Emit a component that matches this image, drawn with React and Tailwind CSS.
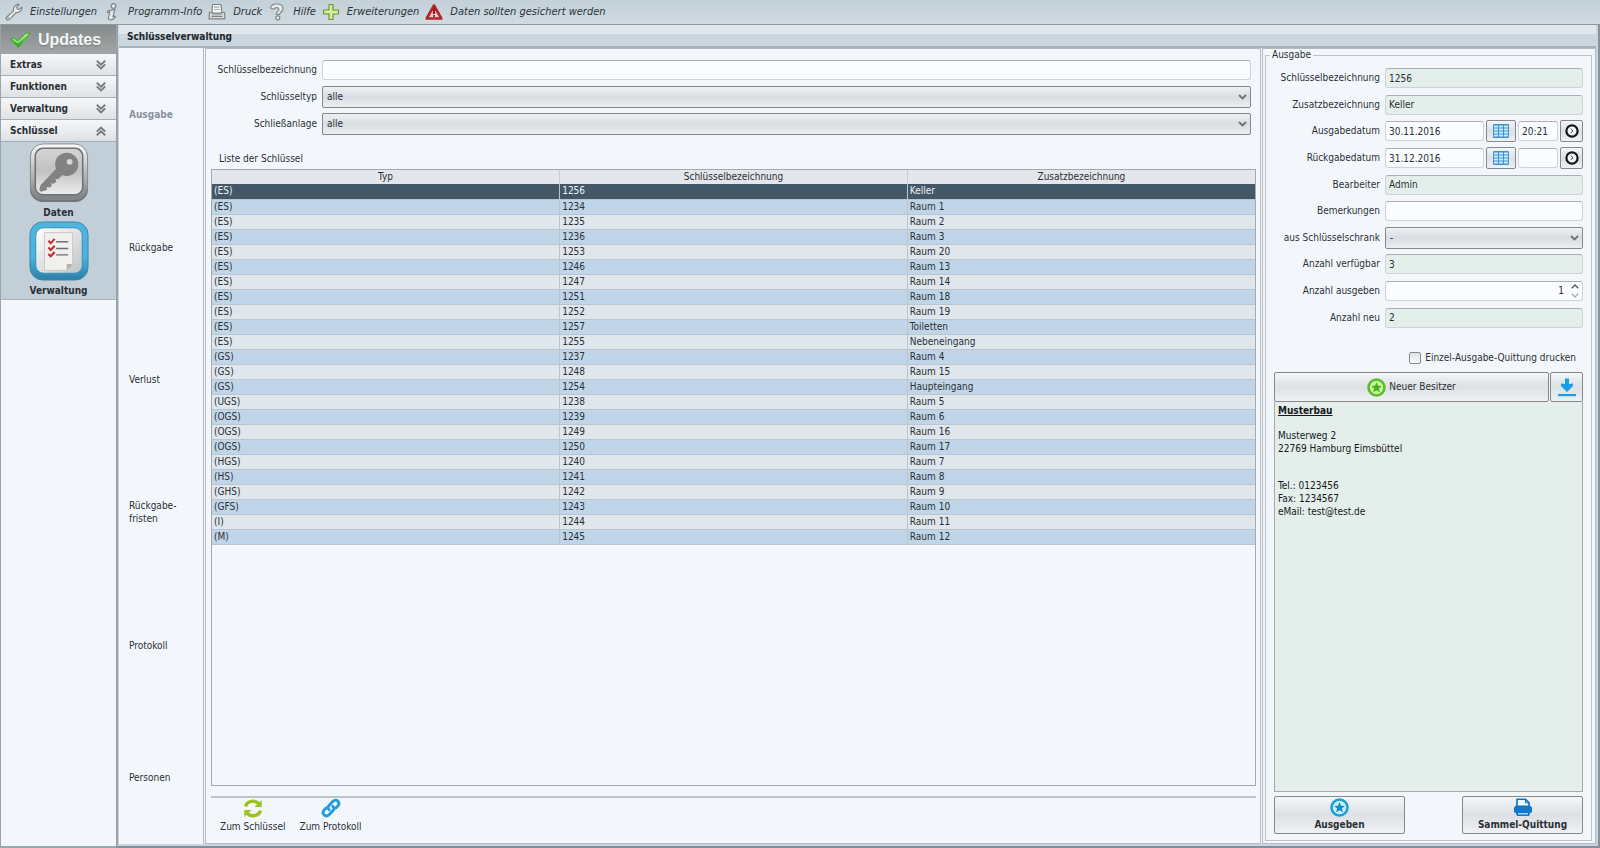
import React, { useState } from "react";

const KEYS = [
  ["(ES)", "1256", "Keller"],
  ["(ES)", "1234", "Raum 1"],
  ["(ES)", "1235", "Raum 2"],
  ["(ES)", "1236", "Raum 3"],
  ["(ES)", "1253", "Raum 20"],
  ["(ES)", "1246", "Raum 13"],
  ["(ES)", "1247", "Raum 14"],
  ["(ES)", "1251", "Raum 18"],
  ["(ES)", "1252", "Raum 19"],
  ["(ES)", "1257", "Toiletten"],
  ["(ES)", "1255", "Nebeneingang"],
  ["(GS)", "1237", "Raum 4"],
  ["(GS)", "1248", "Raum 15"],
  ["(GS)", "1254", "Haupteingang"],
  ["(UGS)", "1238", "Raum 5"],
  ["(OGS)", "1239", "Raum 6"],
  ["(OGS)", "1249", "Raum 16"],
  ["(OGS)", "1250", "Raum 17"],
  ["(HGS)", "1240", "Raum 7"],
  ["(HS)", "1241", "Raum 8"],
  ["(GHS)", "1242", "Raum 9"],
  ["(GFS)", "1243", "Raum 10"],
  ["(I)", "1244", "Raum 11"],
  ["(M)", "1245", "Raum 12"],
];

/* ---------- icons ---------- */

const WrenchIcon = () => (
  <svg width="18" height="18" viewBox="0 0 18 18" aria-hidden="true">
    <path
      d="M1.500 14.200 8.500 7.800C8 4.800 9.800 1.800 13.200 1.200L14 1.500 11.700 4.200 12.300 6 14.200 6.400 16.600 4.200 17 5C16.700 8 14.200 10 11 9.600L4.400 16.600C2.500 17.700.3 16 1.500 14.200Z"
      fill="#e6e8ea"
      stroke="#82878a"
      strokeWidth="1.200"
      strokeLinejoin="round"
    />
    <circle cx="3.200" cy="14.900" r=".8" fill="#7b8388" />
  </svg>
);

const InfoIcon = () => (
  <svg width="14" height="18" viewBox="0 0 14 18" aria-hidden="true">
    <g fill="#e4e6e7" stroke="#82878a" strokeWidth="1.200" strokeLinejoin="round">
      <circle cx="8.500" cy="3" r="2.300" />
      <path d="M2.500 8.200 10 6.300 8 13.400C8 14.200 8.600 14 9.800 13L10.600 14.200C7.800 17.600 2.800 18 3.400 14.300L4.800 9.400 2.500 9.400Z" />
    </g>
  </svg>
);

const PrinterIcon = () => (
  <svg width="18" height="18" viewBox="0 0 18 18" aria-hidden="true">
    <g stroke="#7d8386" strokeWidth="1.200" strokeLinejoin="round">
      <path d="M4.500 1.500H13L14 10H4Z" fill="#f4f6f7" />
      <path d="M1.500 9.500H4L5 11H13L14 9.500H16.500L17 15.800H1Z" fill="#d9dbdc" />
      <path d="M6 4.200H11.500M6 6.500H12" stroke="#aab1b5" />
      <path d="M3.500 13.400H14.500" />
    </g>
  </svg>
);

const HelpIcon = () => (
  <svg width="16" height="18" viewBox="0 0 16 18" aria-hidden="true">
    <g fill="#e8eaeb" stroke="#82878a" strokeWidth="1.200" strokeLinejoin="round">
      <path d="M1.500 5C2 2.200 4.500 1 7.500 1 11.500 1 14 2.800 14 5.800 14 8.500 10.800 9.300 10.500 11.500H7.300C7.200 8.800 9.800 8 10 6.300 10 4.600 6 3.800 4.800 6.200Z" />
      <circle cx="8.800" cy="14.800" r="2" />
    </g>
  </svg>
);

const PlusIcon = () => (
  <svg width="18" height="18" viewBox="0 0 18 18" aria-hidden="true">
    <path
      d="M7 1.500H11V7H16.500V11H11V16.500H7V11H1.500V7H7Z"
      fill="#c8e68a"
      stroke="#6f9a3c"
      strokeWidth="1.200"
      strokeLinejoin="round"
    />
    <path d="M8.500 3V8.500H3M9.500 15V9.500H15" fill="none" stroke="#e6f6c0" />
  </svg>
);

const WarnIcon = () => (
  <svg width="18" height="18" viewBox="0 0 18 18" aria-hidden="true">
    <path d="M9 2.500 16.300 15.500H1.700Z" fill="#ecc6c9" stroke="#b5232b" strokeWidth="2.600" strokeLinejoin="round" />
    <path d="M9 5.200V11" stroke="#8e1a20" strokeWidth="2.200" />
    <circle cx="9" cy="13" r="1.100" fill="#8e1a20" />
  </svg>
);

const CheckIcon = () => (
  <svg width="22" height="16" viewBox="0 0 22 16" aria-hidden="true">
    <defs>
      <linearGradient id="chk" x1="0" y1="0" x2="0" y2="1">
        <stop offset="0" stopColor="#8af25c" />
        <stop offset="1" stopColor="#27a522" />
      </linearGradient>
    </defs>
    <path
      d="M1 7.500 5 5.500 8.500 8.800 17.500 1 21 1.500 9.500 15.200Z"
      fill="url(#chk)"
      stroke="#3a9a30"
      strokeWidth=".8"
      strokeLinejoin="round"
    />
    <path d="M4.500 7 8.500 10.500 18 2.200" stroke="#c6ffab" strokeWidth="1" fill="none" />
  </svg>
);

const DoubleChevron = ({ up }) => (
  <svg width="10" height="10" viewBox="0 0 10 10" aria-hidden="true" className={up ? "rotate-180" : ""}>
    <path d="M.8.8 5 4.800 9.200.8M.8 4.300 5 8.500 9.200 4.300" fill="none" stroke="#777c80" strokeWidth="1.900" />
  </svg>
);

const KeyTile = () => (
  <svg width="60" height="60" viewBox="0 0 62 62" aria-hidden="true">
    <defs>
      <linearGradient id="kf" x1="0" y1="0" x2="0" y2="1">
        <stop offset="0" stopColor="#fafafa" />
        <stop offset="1" stopColor="#7d8081" />
      </linearGradient>
      <linearGradient id="ki" x1="0" y1="0" x2="0" y2="1">
        <stop offset="0" stopColor="#d4d4d4" />
        <stop offset=".5" stopColor="#c2c2c2" />
        <stop offset="1" stopColor="#efefef" />
      </linearGradient>
    </defs>
    <rect x="1" y="2" width="60" height="59" rx="13" fill="#717779" />
    <rect x="1.500" y="1" width="59" height="57" rx="13" fill="url(#kf)" stroke="#8a8e90" />
    <rect x="6.500" y="5.500" width="49" height="48" rx="8" fill="url(#ki)" stroke="#6f7274" strokeWidth="1.600" />
    <g fill="#808284">
      <circle cx="39" cy="22" r="12" />
      <path d="M29.500 25 36 31.500 30 37.500 27.500 37 28 40 25.500 42 23 41.500 23.500 44.500 21.500 46 18.500 45.500 18.500 48.500 12 50.500 10.500 48.500 12 43.500Z" />
    </g>
    <circle cx="42" cy="19.500" r="3" fill="#d6d6d6" />
  </svg>
);

const ListTile = () => (
  <svg width="60" height="60" viewBox="0 0 62 62" aria-hidden="true">
    <defs>
      <linearGradient id="lf" x1="0" y1="0" x2="0" y2="1">
        <stop offset="0" stopColor="#4fb5df" />
        <stop offset=".6" stopColor="#49b4dd" />
        <stop offset="1" stopColor="#2a7fa8" />
      </linearGradient>
      <linearGradient id="li" x1="0" y1="0" x2="1" y2="1">
        <stop offset="0" stopColor="#ffffff" />
        <stop offset="1" stopColor="#bfc3c4" />
      </linearGradient>
    </defs>
    <rect x="1" y="1" width="60" height="60" rx="13" fill="url(#lf)" stroke="#3b87a8" />
    <rect x="7" y="7" width="48" height="47" rx="8" fill="url(#li)" stroke="#2f8fb8" />
    <path d="M16 12H45V45L39 51H16Z" fill="#f1f0ed" stroke="#c9c9c6" />
    <path d="M45.500 44.500H39V51.500Z" fill="#b4b4b2" />
    <g stroke="#6b6f72" strokeWidth="1.500">
      <path d="M28 21.500H40.500M28 28.500H40.500M28 35H40.500" />
    </g>
    <g stroke="#cc2a30" strokeWidth="2.200" fill="none">
      <path d="M20 20.500 22.500 23 26.500 18.500M20 27.500 22.500 30 26.500 25.500M20 34 22.500 36.500 26.500 32" />
    </g>
  </svg>
);

const GridIcon = () => (
  <svg width="16" height="14" viewBox="0 0 16 14" aria-hidden="true">
    <rect width="16" height="14" rx="1" fill="#3e93cf" />
    <g fill="#c9ecff">
      {[1, 6, 11].map((x) =>
        [1, 4, 7, 10].map((y) => <rect key={`${x}-${y}`} x={x} y={y + 0.500} width="4" height="2" />)
      )}
    </g>
  </svg>
);

const ClockIcon = () => (
  <svg width="14" height="14" viewBox="0 0 14 14" aria-hidden="true">
    <circle cx="7" cy="7" r="5.600" fill="#f4f6f8" stroke="#161616" strokeWidth="2.200" />
    <path d="M5.800 4.500 8 7 5.500 8.800" fill="none" stroke="#555" strokeWidth="1" />
  </svg>
);

const StarBadge = ({ ring, fill, star }) => (
  <svg width="19" height="19" viewBox="0 0 19 19" aria-hidden="true">
    <circle cx="9.500" cy="9.500" r="8" fill={fill} stroke={ring} strokeWidth="2.600" />
    <path
      d="M9.500 4.300 11 7.800 14.700 8.100 11.900 10.500 12.800 14.200 9.500 12.200 6.200 14.200 7.100 10.500 4.300 8.100 8 7.800Z"
      fill={star}
    />
  </svg>
);

const DownloadIcon = () => (
  <svg width="18" height="19" viewBox="0 0 18 19" aria-hidden="true">
    <path d="M7 .5H11V6L15 5.500V8L9 14 3 8V5.500L7 6Z" fill="#18a0e6" />
    <rect x="0" y="16" width="18" height="2.200" fill="#18a0e6" />
  </svg>
);

const BluePrinterIcon = () => (
  <svg width="20" height="19" viewBox="0 0 20 19" aria-hidden="true">
    <path d="M4 9V1.300H12.500L16 4.800V9Z" fill="#eef6fc" stroke="#0b6fc0" strokeWidth="1.600" />
    <path d="M12.500 1.500V4.800H16" fill="none" stroke="#0b6fc0" />
    <path d="M3 7.500H17L19 9.500V14.500H17.500L16 18H4L2.500 14.500H1V9.500Z" fill="#0f78cc" />
    <rect x="5" y="15" width="10" height="1.500" fill="#a9d5f5" />
  </svg>
);

const RefreshIcon = () => (
  <svg width="20" height="19" viewBox="0 0 20 19" aria-hidden="true">
    <g fill="none" stroke="#9bc31e" strokeWidth="3.400">
      <path d="M2.500 7.500C4 1.500 12.500.8 15.500 4.800" />
      <path d="M17.500 11.500C16 17.500 7.500 18.200 4.500 14.200" />
    </g>
    <path d="M18.700 1V8H11.500ZM1.300 18V11H8.500Z" fill="#9bc31e" />
  </svg>
);

const LinkIcon = () => (
  <svg width="20" height="20" viewBox="0 0 20 20" aria-hidden="true">
    <g fill="none" stroke="#1f9bdc" strokeWidth="2.800" strokeLinecap="round">
      <path d="M8.200 11.800C6.500 10 7 8.500 8 7.500L12 3.300C13.500 1.800 15.600 1.800 17 3.200 18.200 4.500 18.200 6.500 16.800 7.900L14.800 9.900" />
      <path d="M11.800 8.200C13.500 10 13 11.500 12 12.500L8 16.700C6.500 18.200 4.400 18.200 3 16.800 1.800 15.500 1.800 13.500 3.200 12.100L5.200 10.100" />
    </g>
  </svg>
);

const SelectArrow = () => (
  <svg width="9" height="6" viewBox="0 0 9 6" aria-hidden="true" className="pointer-events-none absolute right-1 top-2">
    <path d="M1 1 4.500 4.500 8 1" fill="none" stroke="#6d7276" strokeWidth="1.800" />
  </svg>
);

/* ---------- form parts ---------- */

const FIELD = "h-5 w-full min-w-0 rounded-[3px] border border-[#cdd3d9] border-t-[#aab0b6] px-[3px] outline-none";
const BUTTON =
  "flex items-center justify-center rounded-[2px] border border-[#85898e] bg-linear-to-b from-[#f4f6f8] via-[#dde0e4] to-[#eff1f4]";

const Select = ({ id, options }) => (
  <div className="relative w-full">
    <select
      id={id}
      className="block h-[22px] w-full appearance-none rounded-[2px] border border-[#85898e] bg-linear-to-b from-[#eef1f4] via-[#d9dde1] to-[#eceff2] px-1 outline-none"
    >
      {options.map((o) => (
        <option key={o}>{o}</option>
      ))}
    </select>
    <SelectArrow />
  </div>
);

const Row = ({ id, label, children }) => (
  <div className="flex items-center gap-[5px]">
    <label htmlFor={id} className="w-[106px] shrink-0 text-right">
      {label}
    </label>
    <div className="flex min-w-0 flex-1 items-center gap-0.5">{children}</div>
  </div>
);

const ReadOnly = ({ id, value }) => <input id={id} readOnly value={value} className={`${FIELD} bg-[#e4eeea]`} />;

const DateRow = ({ id, label, date, time }) => (
  <Row id={id} label={label}>
    <input id={id} defaultValue={date} className={`${FIELD} bg-[#fbfcfd]`} />
    <button type="button" aria-label="Kalender" className={`${BUTTON} h-[22px] w-[30px] shrink-0`}>
      <GridIcon />
    </button>
    <div className="w-10 shrink-0">
      <input aria-label="Uhrzeit" defaultValue={time} className={`${FIELD} bg-[#fbfcfd]`} />
    </div>
    <button type="button" aria-label="Jetzt" className={`${BUTTON} h-[22px] w-[23px] shrink-0`}>
      <ClockIcon />
    </button>
  </Row>
);

/* ---------- page regions ---------- */

const TOOLS = [
  ["Einstellungen", WrenchIcon],
  ["Programm-Info", InfoIcon],
  ["Druck", PrinterIcon],
  ["Hilfe", HelpIcon],
  ["Erweiterungen", PlusIcon],
  ["Daten sollten gesichert werden", WarnIcon],
];

const Toolbar = () => (
  <header className="flex h-[25px] shrink-0 items-center gap-1.5 border-b border-[#8e979e] bg-linear-to-b from-[#c3d0d8] to-[#cfdae1] pl-[5px] text-[11px] text-[#2c3338]">
    {TOOLS.map(([label, Icon]) => (
      <button key={label} type="button" className="flex items-center gap-[7px] italic">
        <span className="flex w-[18px] justify-center">
          <Icon />
        </span>
        {label}
      </button>
    ))}
  </header>
);

const Sidebar = () => (
  <nav className="w-[116px] shrink-0 border-b-2 border-l border-[#9aa6ae]">
    <button
      type="button"
      className="flex h-[29px] w-full items-center gap-[7px] bg-linear-to-b from-[#858a8b] to-[#a1a6a7] pl-2 font-['Liberation_Sans',Arial,sans-serif] text-base font-bold text-[#f4f6f6] text-shadow-sm"
    >
      <CheckIcon />
      Updates
    </button>
    <div className="border-b border-[#a9b2b9] bg-[#c3cfd8]">
      {["Extras", "Funktionen", "Verwaltung", "Schlüssel"].map((name) => (
        <button
          key={name}
          type="button"
          className="flex h-[22px] w-full items-center justify-between border-b border-[#a8afb4] bg-linear-to-b from-[#f6f7f8] to-[#dfe2e5] pl-[9px] pr-[10px] font-bold"
        >
          {name}
          <DoubleChevron up={name === "Schlüssel"} />
        </button>
      ))}
      <div className="flex flex-col items-center pt-px">
        <button type="button" className="flex flex-col items-center gap-0.5 font-bold">
          <KeyTile />
          Daten
        </button>
        <button type="button" className="flex flex-col items-center gap-0.5 font-bold">
          <ListTile />
          Verwaltung
        </button>
      </div>
    </div>
  </nav>
);

const TABS = ["Ausgabe", "Rückgabe", "Verlust", "Rückgabe-\nfristen", "Protokoll", "Personen"];

const Tabs = () => (
  <div role="tablist" className="flex w-[83px] shrink-0 flex-col">
    {TABS.map((t, i) => (
      <button
        key={t}
        type="button"
        role="tab"
        aria-selected={i === 0}
        className={`flex-1 whitespace-pre-line pl-[10px] text-left leading-[13px] ${i === 0 ? "font-bold text-[#8a90a0]" : ""}`}
      >
        {t}
      </button>
    ))}
  </div>
);

const KeyTable = ({ selected, onSelect }) => (
  <table className="w-full table-fixed border-collapse leading-[14px]">
    <thead>
      <tr className="h-[14px] bg-[#e3e6ea]">
        {["Typ", "Schlüsselbezeichnung", "Zusatzbezeichnung"].map((h) => (
          <th key={h} className="border-r border-[#c9ced3] p-0 text-center font-normal last:border-r-0">
            {h}
          </th>
        ))}
      </tr>
    </thead>
    <tbody>
      {KEYS.map((row, i) => (
        <tr
          key={row[1]}
          onClick={() => onSelect(i)}
          className={`h-[15px] ${
            i === selected ? "bg-[#435766] text-[#eef3f7]" : i % 2 ? "bg-[#c0d6e8]" : "bg-[#dfe6ec]"
          }`}
        >
          {row.map((cell) => (
            <td key={cell} className="border-b border-r border-[#b9c6d1] p-0 pl-0.5 last:border-r-0">
              {cell}
            </td>
          ))}
        </tr>
      ))}
    </tbody>
  </table>
);

const ListPanel = () => {
  const [selected, setSelected] = useState(0);
  return (
    <section className="flex min-w-0 flex-1 flex-col border border-[#b4bac0] pb-2 pl-[5px] pr-1 pt-2">
      <div className="grid h-20 grid-rows-3 pr-[5px]">
        <Row id="f-name" label="Schlüsselbezeichnung">
          <input id="f-name" className={`${FIELD} bg-[#fbfcfd]`} />
        </Row>
        <Row id="f-type" label="Schlüsseltyp">
          <Select id="f-type" options={["alle"]} />
        </Row>
        <Row id="f-system" label="Schließanlage">
          <Select id="f-system" options={["alle"]} />
        </Row>
      </div>
      <h2 className="mt-[14px] pl-2">Liste der Schlüssel</h2>
      <div className="mt-0.5 flex-1 border border-[#a3a9ae]">
        <KeyTable selected={selected} onSelect={setSelected} />
      </div>
      <div className="mt-[10px] flex gap-[14px] border-t-2 border-[#c0c4c8] pl-[9px]">
        <button type="button" className="flex flex-col items-center gap-px">
          <span className="flex h-5 items-center">
            <RefreshIcon />
          </span>
          Zum Schlüssel
        </button>
        <button type="button" className="flex flex-col items-center gap-px">
          <span className="flex h-5 items-center">
            <LinkIcon />
          </span>
          Zum Protokoll
        </button>
      </div>
    </section>
  );
};

const IssuePanel = () => {
  const [count, setCount] = useState(1);
  return (
    <section className="flex w-[334px] shrink-0 border border-[#b4bac0] pb-0.5 pl-0.5 pr-[3px]">
      <fieldset className="flex min-w-0 flex-1 flex-col border border-[#bcc2c8] px-2 pb-1.5 pt-1">
        <legend className="-ml-1 px-0.5 leading-3">Ausgabe</legend>
        <div className="grid h-[266px] shrink-0 grid-rows-10">
          <Row id="i-name" label="Schlüsselbezeichnung">
            <ReadOnly id="i-name" value="1256" />
          </Row>
          <Row id="i-extra" label="Zusatzbezeichnung">
            <ReadOnly id="i-extra" value="Keller" />
          </Row>
          <DateRow id="i-out" label="Ausgabedatum" date="30.11.2016" time="20:21" />
          <DateRow id="i-back" label="Rückgabedatum" date="31.12.2016" time="" />
          <Row id="i-user" label="Bearbeiter">
            <ReadOnly id="i-user" value="Admin" />
          </Row>
          <Row id="i-note" label="Bemerkungen">
            <input id="i-note" className={`${FIELD} bg-[#fbfcfd]`} />
          </Row>
          <Row id="i-box" label="aus Schlüsselschrank">
            <Select id="i-box" options={["-"]} />
          </Row>
          <Row id="i-avail" label="Anzahl verfügbar">
            <ReadOnly id="i-avail" value="3" />
          </Row>
          <Row id="i-count" label="Anzahl ausgeben">
            <div className={`${FIELD} flex items-center gap-[7px] bg-[#fbfcfd]`}>
              <input
                id="i-count"
                inputMode="numeric"
                value={count}
                onChange={(e) => setCount(e.target.value)}
                className="min-w-0 flex-1 bg-transparent text-right outline-none"
              />
              <span className="flex flex-col gap-1">
                <button type="button" aria-label="Mehr" onClick={() => setCount(Number(count) + 1)}>
                  <svg width="8" height="5" viewBox="0 0 8 5" aria-hidden="true">
                    <path d="M.8 4.200 4 1 7.200 4.200" fill="none" stroke="#555" strokeWidth="1.300" />
                  </svg>
                </button>
                <button type="button" aria-label="Weniger" onClick={() => setCount(Math.max(1, Number(count) - 1))}>
                  <svg width="8" height="5" viewBox="0 0 8 5" aria-hidden="true">
                    <path d="M.8.8 4 4 7.200.8" fill="none" stroke="#aaa" strokeWidth="1.300" />
                  </svg>
                </button>
              </span>
            </div>
          </Row>
          <Row id="i-new" label="Anzahl neu">
            <ReadOnly id="i-new" value="2" />
          </Row>
        </div>
        <label className="mt-5 flex items-center justify-end gap-1 pr-[7px] leading-[13px]">
          <input
            type="checkbox"
            className="size-3 appearance-none rounded-[2px] border border-[#85898e] bg-linear-to-b from-[#dfe3e7] to-[#f8f9fa] checked:bg-[#435766]"
          />
          Einzel-Ausgabe-Quittung drucken
        </label>
        <div className="mt-2 flex gap-px">
          <button type="button" className={`${BUTTON} h-[30px] flex-1 gap-[3px]`}>
            <StarBadge ring="#58bf2a" fill="#c9f59a" star="#4bb01f" />
            Neuer Besitzer
          </button>
          <button type="button" aria-label="Übernehmen" className={`${BUTTON} h-[30px] w-[33px]`}>
            <DownloadIcon />
          </button>
        </div>
        <address className="flex-1 border border-t-0 border-[#a3a9ae] bg-[#e4eeea] px-[3px] py-0.5 leading-[13px] not-italic text-[#16191c]">
          <p className="mb-3 font-bold underline">Musterbau</p>
          <p>Musterweg 2</p>
          <p className="mb-6">22769 Hamburg Eimsbüttel</p>
          <p>Tel.: 0123456</p>
          <p>Fax: 1234567</p>
          <p>eMail: test@test.de</p>
        </address>
        <div className="mt-1 flex justify-between">
          <button type="button" className={`${BUTTON} h-[38px] w-[131px] flex-col font-bold`}>
            <StarBadge ring="#1c9fd8" fill="#c4f1fc" star="#1a86d0" />
            Ausgeben
          </button>
          <button type="button" className={`${BUTTON} h-[38px] w-[121px] flex-col font-bold`}>
            <BluePrinterIcon />
            Sammel-Quittung
          </button>
        </div>
      </fieldset>
    </section>
  );
};

export default function App() {
  return (
    <div className="flex min-h-screen flex-col bg-[#f3f7fc] font-['DejaVu_Sans_Condensed','Noto_Sans',sans-serif] text-[10px] leading-4 text-[#2b3035]">
      <Toolbar />
      <div className="flex flex-1">
        <Sidebar />
        <div className="flex min-w-0 flex-1 flex-col border-b-2 border-l-2 border-r-2 border-b-[#858d9b] border-l-[#98a2ab] border-r-[#8793a0]">
          <div className="flex min-w-0 flex-1 flex-col border-b-2 border-l border-r-2 border-[#ccd5de]">
            <h1 className="flex h-[23px] shrink-0 items-center border-b-2 border-[#a8b0b6] bg-linear-to-b from-[#e1e9ee] from-45% to-[#cbd7df] to-45% pl-2 pt-0.5 font-bold text-[#22272b]">
              Schlüsselverwaltung
            </h1>
            <main className="flex flex-1 gap-px">
              <Tabs />
              <div className="flex min-w-0 flex-1 gap-px border-l border-[#b4bac0] pl-px">
                <ListPanel />
                <IssuePanel />
              </div>
            </main>
          </div>
        </div>
      </div>
    </div>
  );
}
